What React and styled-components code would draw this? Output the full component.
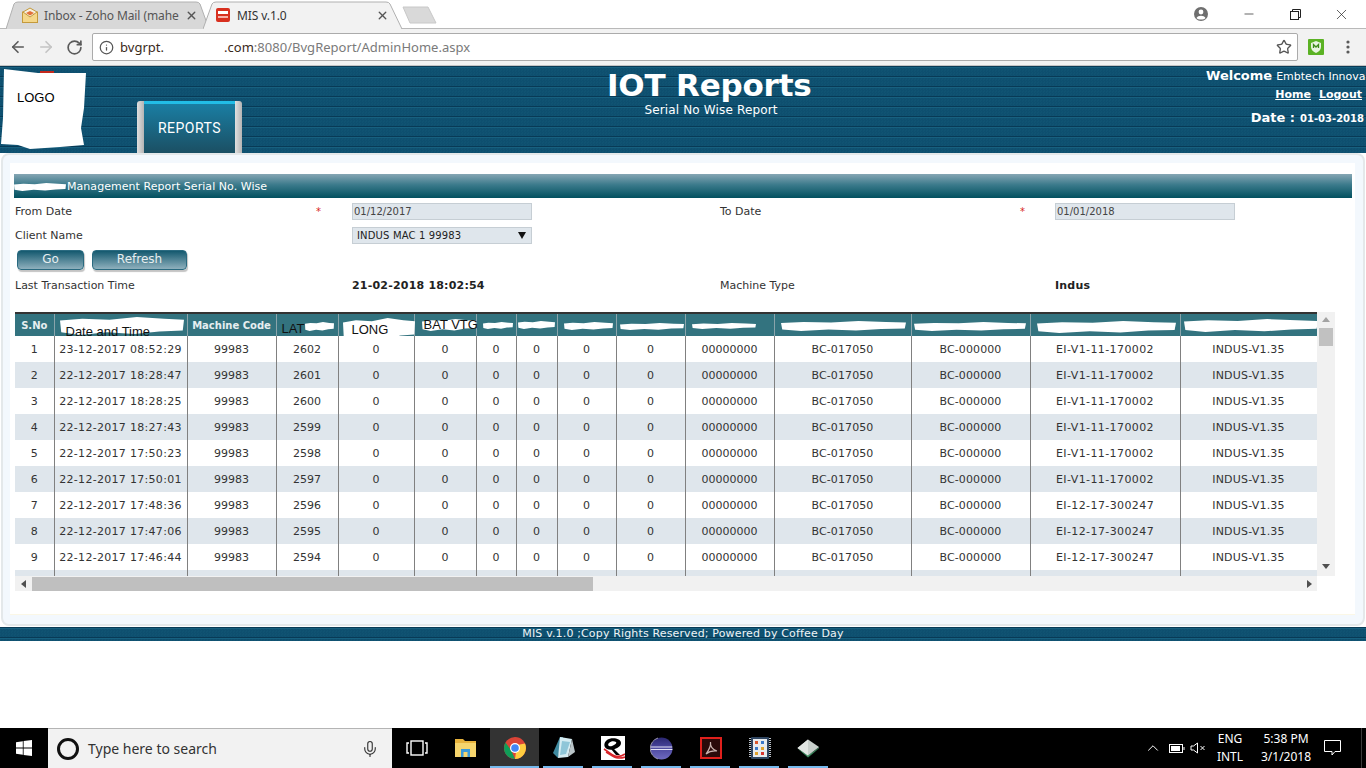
import React from "react";
import styled, { createGlobalStyle } from "styled-components";
import { ArrowLeft, ArrowRight, RotateCw, Star, X, Minus, Info, Mic, ChevronUp } from "lucide-react";

const GlobalStyle = createGlobalStyle`
  html, body {
    margin: 0;
    padding: 0;
    background: #fff;
    overflow: hidden;
  }
  * { box-sizing: border-box; }
`;

const Page = styled.div`
  width: 1366px;
  height: 768px;
  display: flex;
  flex-direction: column;
  font-family: "DejaVu Sans", Verdana, sans-serif;
  background: #fff;
`;

/* browser chrome */
const TabStrip = styled.div`
  height: 29px;
  flex: none;
  display: flex;
  align-items: flex-end;
  padding-left: 6px;
  background: #fff;
  border-bottom: 1px solid #b9b9b9;
  font-family: "Noto Sans", "Open Sans", sans-serif;
  font-size: 12px;
`;

const Tab = styled.div`
  position: relative;
  width: ${(p) => p.$width}px;
  height: 28px;
  margin-bottom: -1px;
  margin-right: -6px;
  display: flex;
  align-items: center;
  padding: 0 16px 0 ${(p) => p.$pad}px;
  gap: 6px;
  color: ${(p) => (p.$active ? "#333" : "#555")};
  z-index: ${(p) => (p.$active ? 2 : 1)};
`;

const TabShape = styled.svg`
  position: absolute;
  inset: 0;
  width: 100%;
  height: 100%;
`;

const TabIcon = styled.svg`
  position: relative;
  width: 16px;
  height: 16px;
  flex: none;
`;

const TabTitle = styled.span`
  position: relative;
  flex: 1;
  white-space: nowrap;
  letter-spacing: -0.1px;
`;

const TabClose = styled(X)`
  position: relative;
  flex: none;
  color: #555;
`;

const NewTab = styled.svg`
  width: 36px;
  height: 18px;
  margin: 0 0 4px 3px;
`;

const WindowControls = styled.div`
  margin-left: auto;
  height: 28px;
  display: flex;
  align-items: center;
  padding-right: 2px;
  color: #222;
`;

const WinButton = styled.div`
  width: 46px;
  height: 26px;
  display: flex;
  align-items: center;
  justify-content: center;
`;

const ProfileButton = styled(WinButton)`
  margin-right: 2px;
`;

const Toolbar = styled.div`
  height: 37px;
  flex: none;
  display: flex;
  align-items: center;
  background: #f2f2f2;
  border-bottom: 1px solid #c4c4c4;
  padding-left: 4px;
`;

const NavButton = styled.div`
  width: 28px;
  display: flex;
  justify-content: center;
  color: ${(p) => (p.$off ? "#c4c4c4" : "#5a5a5a")};
`;

const Omnibox = styled.div`
  width: 1206px;
  height: 28px;
  margin: 0 2px 0 4px;
  display: flex;
  align-items: center;
  background: #fff;
  border: 1px solid #ababab;
  border-radius: 2px;
  padding-left: 6px;
  font-family: "Noto Sans", "Open Sans", sans-serif;
  font-size: 13px;
  letter-spacing: 0.02px;
  color: #7a7a7a;
`;

const UrlDark = styled.span`
  color: #3a2a1a;
  margin-left: ${(p) => p.$gap || 0}px;
`;

const OmniStar = styled(Star)`
  margin-left: auto;
  margin-right: 5px;
  color: #555;
`;

const ExtSlot = styled.div`
  width: 32px;
  display: flex;
  justify-content: center;
`;

/* site header */
const SiteHeader = styled.header`
  height: 87px;
  flex: none;
  display: grid;
  grid-template-columns: 607px 204px minmax(0, 1fr);
  color: #fff;
  background-color: #0e5070;
  background-image:
    repeating-linear-gradient(180deg, #17607f 0 1px, transparent 1px 9px, #083a56 9px 10px),
    repeating-conic-gradient(#0e4f6f 0 25%, #105372 0 50%);
  background-size: 100% 10px, 3px 3px;
  background-position: 0 1px, 0 0;
`;

const HeaderLeft = styled.div`
  display: flex;
`;

const LogoBlock = styled.div`
  position: relative;
  width: 86px;
  height: 82px;
  margin-top: 2px;
  padding: 22px 0 0 17px;
  font-family: "Liberation Sans", Arial, sans-serif;
  font-size: 13px;
  color: #000;
`;

const LogoPaint = styled.svg`
  position: absolute;
  inset: 0;
  width: 86px;
  height: 82px;
`;

const LogoText = styled.span`
  position: relative;
`;

const NavTab = styled.div`
  align-self: flex-end;
  margin-left: 51px;
  width: 105px;
  height: 52px;
  display: flex;
  border-radius: 3px 3px 0 0;
  overflow: hidden;
`;

const NavEdge = styled.div`
  width: 7px;
  background: linear-gradient(90deg, #e0e0e0, #b4b4b4);
`;

const NavFace = styled.div`
  flex: 1;
  display: flex;
  align-items: center;
  justify-content: center;
  border-top: 3px solid #22bde6;
  background: linear-gradient(180deg, #1a7ea3, #1b4f63);
  font-family: Roboto, "Open Sans", sans-serif;
  font-size: 14px;
  letter-spacing: 0.5px;
  padding-bottom: 2px;
`;

const TitleBlock = styled.div`
  text-align: center;
`;

const SiteTitle = styled.div`
  font-size: 31px;
  font-weight: 700;
  line-height: 38px;
  letter-spacing: -0.2px;
  white-space: nowrap;
`;

const SubTitle = styled.div`
  font-size: 12px;
  line-height: 12px;
  padding-left: 4px;
  letter-spacing: 0.15px;
  white-space: nowrap;
`;

const UserBlock = styled.div`
  padding-top: 1px;
`;

const WelcomeRow = styled.div`
  margin-left: 395px;
  display: flex;
  align-items: baseline;
  gap: 4px;
  line-height: 17px;
  white-space: nowrap;
  font-size: 11px;
`;

const Strong = styled.b`
  font-size: ${(p) => p.$size}px;
`;

const LinkRow = styled.div`
  display: flex;
  justify-content: flex-end;
  gap: 8px;
  padding-right: 4px;
  margin-top: 3px;
  line-height: 14px;
  font-size: 11px;
  font-weight: 700;
`;

const HeaderLink = styled.span`
  text-decoration: underline;
`;

const DateRow = styled.div`
  display: flex;
  justify-content: flex-end;
  align-items: baseline;
  gap: 5px;
  padding-right: 2px;
  margin-top: 8px;
  line-height: 16px;
  white-space: nowrap;
`;

/* report panel */
const Panel = styled.main`
  height: 474px;
  flex: none;
  padding: 0 1px 1px;
  background: #fff;
`;

const PanelFrame = styled.div`
  height: 100%;
  padding: 8px 8px 9px 7px;
  background: #f3f8fd;
  border: 2px solid #e4e8ea;
  border-radius: 8px;
`;

const PanelBody = styled.div`
  height: 100%;
  background: #fff;
  padding: 11px 3px 0 4px;
  border-bottom: 1px solid #fbf7e6;
`;

const SectionBar = styled.div`
  position: relative;
  height: 24px;
  display: flex;
  align-items: center;
  padding-left: 53px;
  color: #fff;
  font-size: 11px;
  letter-spacing: 0.05px;
  background: linear-gradient(180deg, #86a6b4 0%, #3b7a8b 45%, #02505f 100%);
`;

const FormGrid = styled.div`
  display: grid;
  grid-template-columns: 301px 36px 368px 300px 35px 1fr;
  grid-auto-rows: 24px;
  align-items: center;
  padding-left: 1px;
  margin-top: 1px;
  color: #333;
  font-size: 11px;
`;

const Req = styled.span`
  color: #d8261c;
  font-size: 10px;
`;

const DateInput = styled.div`
  width: 180px;
  height: 17px;
  display: flex;
  align-items: center;
  padding-left: 1px;
  background: #dfe6ec;
  border: 1px solid #c6ced4;
  font-size: 10px;
  color: #444;
`;

const SelectBox = styled.div`
  width: 180px;
  height: 17px;
  display: flex;
  align-items: center;
  justify-content: space-between;
  padding: 0 5px 0 4px;
  background: #dfe6ec;
  border: 1px solid #c6ced4;
  font-size: 10px;
  letter-spacing: 0.15px;
  color: #222;
`;

const ButtonRow = styled.div`
  display: flex;
  gap: 8px;
  padding-left: 3px;
  margin-top: 3px;
  height: 20px;
`;

const ActionButton = styled.button`
  width: ${(p) => p.$width}px;
  height: 20px;
  padding: 0 0 2px;
  border: 1px solid #2a6a80;
  border-radius: 4px;
  color: #e8eef0;
  font-family: inherit;
  font-size: 12px;
  background: linear-gradient(180deg, #14596f 0%, #8fb0bd 100%);
  box-shadow: 1px 2px 1px #c4c4c4;
`;

const InfoGrid = styled(FormGrid)`
  margin-top: 3px;
`;

const Value = styled.b`
  font-size: 11px;
  letter-spacing: 0.2px;
  color: #222;
`;

const TableArea = styled.div`
  display: grid;
  grid-template-columns: 1302px 18px;
  grid-template-rows: 264px 15px;
  margin: 15px 0 0 1px;
`;

const TableClip = styled.div`
  overflow: hidden;
  background: #fff;
`;

const Grid = styled.table`
  table-layout: fixed;
  width: 1302px;
  border-collapse: collapse;
  font-size: 11px;
  color: #333;
`;

const HeadRow = styled.tr`
  height: 23px;
  background: #33737f;
  border-top: 2px solid #333;
`;

const HeadCell = styled.th`
  position: relative;
  padding: 0;
  font-size: 10px;
  font-weight: 700;
  color: #e6eef0;
  white-space: nowrap;
  border-left: 1px solid #8aa4ab;
  &:first-child { border-left: 0; }
  &:last-child { border-right: 1px solid #808080; }
`;

const Row = styled.tr`
  height: 26px;
  background: ${(p) => (p.$alt ? "#dfe6ec" : "#fff")};
`;

const Cell = styled.td`
  padding: 0;
  text-align: center;
  white-space: nowrap;
  letter-spacing: ${(p) => p.$ls || 0}px;
  border-left: 1px solid #808080;
  &:first-child { border-left: 0; }
  &:last-child { border-right: 1px solid #808080; }
`;

const Blot = styled.svg`
  position: absolute;
  left: ${(p) => p.$x}px;
  top: ${(p) => p.$y}px;
  width: ${(p) => p.$w}px;
  height: ${(p) => p.$h}px;
  z-index: 1;
  overflow: visible;
`;

const PenLabel = styled.span`
  position: absolute;
  left: ${(p) => p.$x}px;
  top: ${(p) => p.$y}px;
  z-index: 2;
  font-family: "Liberation Sans", Arial, sans-serif;
  font-size: 13px;
  font-weight: 400;
  line-height: 15px;
  color: #111;
`;

const VScroll = styled.div`
  background: #f1f1f1;
  display: flex;
  flex-direction: column;
  align-items: center;
  padding-top: 5px;
`;

const VThumb = styled.div`
  width: 14px;
  height: 18px;
  margin-top: 6px;
  background: #c1c1c1;
`;

const HScroll = styled.div`
  display: flex;
  align-items: center;
  background: #f1f1f1;
  padding-left: 6px;
`;

const HThumb = styled.div`
  width: 561px;
  height: 14px;
  margin-left: 6px;
  background: #bfbfbf;
`;

const Arrow = styled.svg`
  flex: none;
  width: ${(p) => p.$w}px;
  height: ${(p) => p.$h}px;
  margin: ${(p) => p.$m || 0};
`;

/* footer */
const SiteFooter = styled.footer`
  height: 14px;
  flex: none;
  text-align: center;
  color: #eef4f6;
  font-size: 11px;
  line-height: 13px;
  letter-spacing: 0.15px;
  background-color: #0e5070;
  background-image:
    repeating-linear-gradient(180deg, #17607f 0 1px, transparent 1px 9px, #083a56 9px 10px),
    repeating-conic-gradient(#0e4f6f 0 25%, #105372 0 50%);
  background-size: 100% 10px, 3px 3px;
  background-position: 0 1px, 0 0;
`;

const Filler = styled.div`
  flex: 1;
  background: #fff;
`;

/* windows taskbar */
const Taskbar = styled.div`
  height: 40px;
  flex: none;
  display: flex;
  background: #000;
  color: #fff;
  font-family: "Noto Sans", "Open Sans", sans-serif;
`;

const StartButton = styled.div`
  width: 48px;
  display: flex;
  align-items: center;
  justify-content: center;
`;

const SearchBox = styled.div`
  width: 344px;
  display: flex;
  align-items: center;
  padding: 0 13px 0 9px;
  background: #f2f2f2;
  border-top: 1px solid #b4b4b4;
  color: #333;
  font-size: 14px;
  gap: 9px;
`;

const CortanaRing = styled.div`
  width: 22px;
  height: 22px;
  border: 3px solid #111;
  border-radius: 50%;
`;

const SearchMic = styled(Mic)`
  margin-left: auto;
  color: #333;
`;

const TaskSlot = styled.div`
  position: relative;
  width: 49px;
  display: flex;
  align-items: center;
  justify-content: center;
  background: ${(p) => (p.$active ? "#333" : "transparent")};
  &::after {
    content: "";
    display: ${(p) => (p.$running ? "block" : "none")};
    position: absolute;
    left: ${(p) => (p.$active ? 0 : 4)}px;
    right: ${(p) => (p.$active ? 0 : 5)}px;
    bottom: 0;
    height: 2px;
    background: #76b9ed;
  }
`;

const Tray = styled.div`
  margin-left: auto;
  margin-right: 4px;
  padding-right: 17px;
  height: 100%;
  display: flex;
  align-items: center;
  font-size: 12px;
  border-right: 1px solid #3a3a3a;
`;

const TrayIcon = styled.div`
  width: ${(p) => p.$w}px;
  display: flex;
  justify-content: center;
`;

const TrayText = styled.div`
  width: ${(p) => p.$w}px;
  text-align: center;
  line-height: 18px;
  white-space: nowrap;
`;

const COLS = [39, 133, 89, 62, 76, 62, 40, 41, 59, 69, 89, 137, 119, 150, 137];

const HEAD_CELLS = [
  { label: "S.No" },
  { blot: [5, 3, 124, 18], pen: ["Date and Time", 11, 10] },
  { label: "Machine Code" },
  { blot: [28, 8, 29, 9], pen: ["LAT", 5, 7] },
  { blot: [4, 4, 72, 22], pen: ["LONG", 13, 8] },
  { blot: [7, 5, 54, 12], pen: ["BAT VTG", 9, 3] },
  { blot: [6, 8, 30, 7] },
  { blot: [1, 7, 37, 8] },
  { blot: [6, 8, 49, 8] },
  { blot: [3, 9, 64, 7] },
  { blot: [6, 9, 64, 6] },
  { blot: [6, 7, 125, 10] },
  { blot: [2, 8, 112, 9] },
  { blot: [6, 7, 139, 12] },
  { blot: [3, 5, 134, 13] },
];

const ROWS = [
  ["1", "23-12-2017 08:52:29", "2602", "EI-V1-11-170002"],
  ["2", "22-12-2017 18:28:47", "2601", "EI-V1-11-170002"],
  ["3", "22-12-2017 18:28:25", "2600", "EI-V1-11-170002"],
  ["4", "22-12-2017 18:27:43", "2599", "EI-V1-11-170002"],
  ["5", "22-12-2017 17:50:23", "2598", "EI-V1-11-170002"],
  ["6", "22-12-2017 17:50:01", "2597", "EI-V1-11-170002"],
  ["7", "22-12-2017 17:48:36", "2596", "EI-12-17-300247"],
  ["8", "22-12-2017 17:47:06", "2595", "EI-12-17-300247"],
  ["9", "22-12-2017 17:46:44", "2594", "EI-12-17-300247"],
];

// rough white paint stroke, stretched to whatever box it is given
const PaintBlot = ({ box }) => (
  <Blot $x={box[0]} $y={box[1]} $w={box[2]} $h={box[3]} viewBox="0 0 100 20" preserveAspectRatio="none">
    <path fill="#fff" d="M0 4 L18 2 L40 3 L62 0 L84 2 L100 3 L99 15 L80 16 L60 19 L38 17 L16 20 L1 17 Z" />
  </Blot>
);

const WindowsLogo = () => (
  <svg width="16" height="16" viewBox="0 0 16 16" fill="#fff">
    <path d="M0 2.2 L6.8 1.2 V7.6 H0 Z M7.6 1.1 L16 0 V7.6 H7.6 Z M0 8.4 H6.8 V14.8 L0 13.8 Z M7.6 8.4 H16 V16 L7.6 14.9 Z" />
  </svg>
);

const FolderIcon = () => (
  <svg width="22" height="20" viewBox="0 0 22 20">
    <path fill="#e8b33c" d="M0 1 H8 L10 3 H21 V19 H0 Z" />
    <path fill="#f6d56d" d="M0 5 H21 V19 H0 Z" />
    <path fill="#3a9ad9" d="M6 11 H15 V19 H12.5 V14 H8.5 V19 H6 Z" />
  </svg>
);

const ChromeIcon = () => (
  <svg width="22" height="22" viewBox="0 0 22 22">
    <circle cx="11" cy="11" r="11" fill="#db4437" />
    <path fill="#0f9d58" d="M11 22 A11 11 0 0 1 1.5 5.5 L7 13 Z" />
    <path fill="#ffcd40" d="M11 22 A11 11 0 0 0 21 6.5 L13 8 Z" />
    <circle cx="11" cy="11" r="5" fill="#fff" />
    <circle cx="11" cy="11" r="3.8" fill="#4285f4" />
  </svg>
);

const NotepadIcon = () => (
  <svg width="22" height="24" viewBox="0 0 22 24">
    <path fill="#3f8aa0" d="M0 17 L7 1 L10 1 L5 22 Z" />
    <path fill="#d5ecf2" d="M7 1 L19 3 L15 21 L5 22 Z" />
    <path fill="#8fc6d8" d="M9 5 L17 6 L13 18 L7 19 Z" />
    <path fill="#b9c4c8" d="M19 3 L22 16 L15 21 Z" />
  </svg>
);

const QIcon = () => (
  <svg width="24" height="24" viewBox="0 0 24 24">
    <rect width="24" height="24" fill="#fff" />
    <path d="M6 4 C10 1 20 2 20 7 C20 12 11 15 6 13 C2 11 3 6 6 4 Z M8 7 C6 9 8 11 11 10 C14 9 16 7 15 6 C13 5 10 5 8 7 Z" fill="#000" fillRule="evenodd" />
    <path d="M10 13 L13 13 L19 19 L15 19 Z" fill="#000" />
    <path d="M3 13 C8 16 10 19 14 20 C18 21 21 20 24 18 M5 16 C9 18 12 22 17 22 C20 22 22 22 24 21" fill="none" stroke="#d9252a" strokeWidth="1.6" />
  </svg>
);

const EclipseIcon = () => (
  <svg width="23" height="23" viewBox="0 0 23 23">
    <defs>
      <linearGradient id="eclipseFace" x1="0" y1="0" x2="0" y2="1">
        <stop offset="0" stopColor="#2a2670" />
        <stop offset="0.45" stopColor="#4a469c" />
        <stop offset="1" stopColor="#6f6bc0" />
      </linearGradient>
    </defs>
    <circle cx="11.5" cy="11.5" r="11" fill="url(#eclipseFace)" />
    <path fill="#e4e2f6" d="M0.8 9.5 H22.2 V10.5 H0.8 Z M0.6 12 H22.4 V13 H0.6 Z" />
    <path fill="none" stroke="#9b97b0" d="M8 1 A11 11 0 0 0 8 22" />
  </svg>
);

const AcrobatIcon = () => (
  <svg width="22" height="22" viewBox="0 0 22 22">
    <rect x="1" y="1" width="20" height="20" fill="#2a0a0a" stroke="#e0201c" strokeWidth="2" />
    <path fill="none" stroke="#c9b4b0" strokeWidth="1.2" d="M6 17 C9 13 11 9 10.5 5 C10 9 12.5 13 17 14 C13 13.5 9 14.5 6 17 Z" />
  </svg>
);

const ChipIcon = () => (
  <svg width="22" height="22" viewBox="0 0 22 22">
    <path stroke="#b9c0c8" strokeWidth="2" strokeDasharray="1 1" d="M1 1 V21 M21 1 V21" />
    <rect x="2" y="0" width="18" height="22" rx="1" fill="#2f4560" />
    <rect x="4" y="2" width="14" height="18" fill="#e8ebee" />
    <rect x="6" y="4" width="3" height="3" fill="#d9562e" />
    <rect x="12" y="4" width="3" height="3" fill="#3b79c9" />
    <rect x="6" y="10" width="3" height="3" fill="#3b79c9" />
    <rect x="12" y="10" width="3" height="3" fill="#e0a22d" />
    <rect x="6" y="15" width="3" height="3" fill="#e0a22d" />
    <rect x="12" y="15" width="3" height="3" fill="#d9362e" />
  </svg>
);

const GemIcon = () => (
  <svg width="23" height="19" viewBox="0 0 23 19">
    <path fill="#3e8f62" d="M1 10 L11 19 L22 8 L22 9 L11 18.9 Z" />
    <path fill="#3e8f62" d="M0.5 9.5 L11 18.5 L22.5 8.5 L11 16 Z" />
    <path fill="#c9d0cc" d="M11 0.5 L22 8 L11 16.5 L0.5 9 Z" />
    <path fill="#e2e6e3" d="M11 0.5 L11 16.5 L0.5 9 Z" />
  </svg>
);

export default function App() {
  return (
    <Page>
      <GlobalStyle />

      <TabStrip>
        <Tab $width={203} $pad={16}>
          <TabShape viewBox="0 0 203 28" preserveAspectRatio="none">
            <path fill="#d8d8d8" stroke="#b0b0b0" d="M0 28 L8 3 Q9 1 12 1 H190 Q193 1 194 3 L203 28" />
          </TabShape>
          <TabIcon viewBox="0 0 16 16">
            <rect x="0.5" y="5" width="15" height="10.5" fill="#f4d78a" stroke="#c49a3c" />
            <path d="M1 5 L8 1 L15 5 L8 10 Z" fill="#f6f0df" stroke="#c49a3c" />
            <path d="M4 6 L8 4 L12 6 L8 8.5 Z" fill="#e2703a" />
          </TabIcon>
          <TabTitle>Inbox - Zoho Mail (mahe</TabTitle>
          <TabClose size={13} strokeWidth={2.5} />
        </Tab>
        <Tab $width={202} $pad={12} $active>
          <TabShape viewBox="0 0 202 28" preserveAspectRatio="none">
            <path fill="#f2f2f2" stroke="#b0b0b0" d="M0 28 L9 3 Q10 1 13 1 H183 Q186 1 187 3 L199 28" />
          </TabShape>
          <TabIcon viewBox="0 0 16 16">
            <rect x="1" y="1" width="14" height="14" rx="2" fill="#d8301f" />
            <rect x="3" y="4" width="10" height="3" fill="#fff" />
            <rect x="3" y="9" width="10" height="2" fill="#f6b0a8" />
          </TabIcon>
          <TabTitle>MIS v.1.0</TabTitle>
          <TabClose size={13} strokeWidth={2.5} />
        </Tab>
        <NewTab viewBox="0 0 36 18">
          <path fill="#d9d9d9" stroke="#c8c8c8" d="M1 1 H26 L34 17 H8 Z" />
        </NewTab>
        <WindowControls>
          <ProfileButton>
            <svg width="16" height="16" viewBox="0 0 16 16">
              <circle cx="8" cy="8" r="7" fill="#6f6f6f" />
              <circle cx="8" cy="6" r="2.4" fill="#fff" />
              <path d="M3.5 12 C5 9 11 9 12.5 12 C11 14 5 14 3.5 12 Z" fill="#fff" />
            </svg>
          </ProfileButton>
          <WinButton>
            <Minus size={14} strokeWidth={1.2} />
          </WinButton>
          <WinButton>
            <svg width="11" height="11" viewBox="0 0 11 11" fill="none" stroke="#222">
              <rect x="0.5" y="2.5" width="8" height="8" />
              <path d="M2.5 2.5 V0.5 H10.5 V8.5 H8.5" />
            </svg>
          </WinButton>
          <WinButton>
            <X size={17} strokeWidth={1} />
          </WinButton>
        </WindowControls>
      </TabStrip>

      <Toolbar>
        <NavButton><ArrowLeft size={18} strokeWidth={2.2} /></NavButton>
        <NavButton $off><ArrowRight size={18} strokeWidth={2.2} /></NavButton>
        <NavButton><RotateCw size={17} strokeWidth={2.4} /></NavButton>
        <Omnibox>
          <Info size={15} color="#555" strokeWidth={2} />
          <UrlDark $gap={6}>bvgrpt.</UrlDark>
          <UrlDark $gap={60}>.com</UrlDark>
          <span>:8080/BvgReport/AdminHome.aspx</span>
          <OmniStar size={16} strokeWidth={2} />
        </Omnibox>
        <ExtSlot>
          <svg width="16" height="16" viewBox="0 0 16 16">
            <rect width="16" height="16" rx="1" fill="#5bb224" />
            <path d="M8 2 L13 4 V8 C13 11 10.5 13 8 14 C5.5 13 3 11 3 8 V4 Z" fill="#e8f4e0" />
            <path d="M5.5 9 V5.5 L8 8 L10.5 5.5 V9" fill="none" stroke="#3d8a1a" strokeWidth="1.3" />
          </svg>
        </ExtSlot>
        <ExtSlot>
          <svg width="4" height="14" viewBox="0 0 4 14" fill="#5a5a5a">
            <circle cx="2" cy="2" r="1.6" />
            <circle cx="2" cy="7" r="1.6" />
            <circle cx="2" cy="12" r="1.6" />
          </svg>
        </ExtSlot>
      </Toolbar>

      <SiteHeader>
        <HeaderLeft>
          <LogoBlock>
            <LogoPaint viewBox="0 0 86 82">
              <path fill="#c4281c" d="M40 3 H54 V6 H40 Z" />
              <path fill="#fff" d="M4 1 L38 5 L86 5 L84 40 L81 60 L84 77 L60 79 L30 81 L18 77 L1 76 L3 50 Z" />
            </LogoPaint>
            <LogoText>LOGO</LogoText>
          </LogoBlock>
          <NavTab>
            <NavEdge />
            <NavFace>REPORTS</NavFace>
            <NavEdge />
          </NavTab>
        </HeaderLeft>
        <TitleBlock>
          <SiteTitle>IOT Reports</SiteTitle>
          <SubTitle>Serial No Wise Report</SubTitle>
        </TitleBlock>
        <UserBlock>
          <WelcomeRow>
            <Strong $size={13}>Welcome</Strong>
            <span>Embtech Innova</span>
          </WelcomeRow>
          <LinkRow>
            <HeaderLink>Home</HeaderLink>
            <HeaderLink>Logout</HeaderLink>
          </LinkRow>
          <DateRow>
            <Strong $size={13}>Date :</Strong>
            <Strong $size={10}>01-03-2018</Strong>
          </DateRow>
        </UserBlock>
      </SiteHeader>

      <Panel>
        <PanelFrame>
          <PanelBody>
            <SectionBar>
              <PaintBlot box={[0, 9, 52, 8]} />
              Management Report Serial No. Wise
            </SectionBar>
            <FormGrid>
              <span>From Date</span>
              <Req>*</Req>
              <DateInput>01/12/2017</DateInput>
              <span>To Date</span>
              <Req>*</Req>
              <DateInput>01/01/2018</DateInput>
              <span>Client Name</span>
              <span />
              <SelectBox>
                INDUS MAC 1 99983
                <svg width="8" height="7" viewBox="0 0 8 7"><path d="M0 0 H8 L4 7 Z" fill="#111" /></svg>
              </SelectBox>
            </FormGrid>
            <ButtonRow>
              <ActionButton $width={67}>Go</ActionButton>
              <ActionButton $width={95}>Refresh</ActionButton>
            </ButtonRow>
            <InfoGrid>
              <span>Last Transaction Time</span>
              <span />
              <Value>21-02-2018 18:02:54</Value>
              <span>Machine Type</span>
              <span />
              <Value>Indus</Value>
            </InfoGrid>
            <TableArea>
              <TableClip>
                <Grid>
                  <colgroup>
                    {COLS.map((w, i) => <col key={i} width={w} />)}
                  </colgroup>
                  <thead>
                    <HeadRow>
                      {HEAD_CELLS.map((h, i) => (
                        <HeadCell key={i}>
                          {h.label}
                          {h.blot && <PaintBlot box={h.blot} />}
                          {h.pen && <PenLabel $x={h.pen[1]} $y={h.pen[2]}>{h.pen[0]}</PenLabel>}
                        </HeadCell>
                      ))}
                    </HeadRow>
                  </thead>
                  <tbody>
                    {ROWS.map((r, i) => (
                      <Row key={r[0]} $alt={i % 2 === 1}>
                        <Cell>{r[0]}</Cell>
                        <Cell $ls={0.3}>{r[1]}</Cell>
                        <Cell>99983</Cell>
                        <Cell>{r[2]}</Cell>
                        <Cell>0</Cell>
                        <Cell>0</Cell>
                        <Cell>0</Cell>
                        <Cell>0</Cell>
                        <Cell>0</Cell>
                        <Cell>0</Cell>
                        <Cell>00000000</Cell>
                        <Cell $ls={0.1}>BC-017050</Cell>
                        <Cell $ls={0.1}>BC-000000</Cell>
                        <Cell $ls={0.4}>{r[3]}</Cell>
                        <Cell $ls={0.2}>INDUS-V1.35</Cell>
                      </Row>
                    ))}
                    {/* next row is scrolled almost out of view, only its band shows */}
                    <Row $alt>
                      {COLS.map((w, i) => <Cell key={i} />)}
                    </Row>
                  </tbody>
                </Grid>
              </TableClip>
              <VScroll>
                <Arrow $w={8} $h={5} viewBox="0 0 8 5"><path d="M4 0 L8 5 H0 Z" fill="#a3a3a3" /></Arrow>
                <VThumb />
                <Arrow $w={8} $h={5} $m="auto 0 7px" viewBox="0 0 8 5"><path d="M0 0 H8 L4 5 Z" fill="#505050" /></Arrow>
              </VScroll>
              <HScroll>
                <Arrow $w={5} $h={8} viewBox="0 0 5 8"><path d="M5 0 V8 L0 4 Z" fill="#505050" /></Arrow>
                <HThumb />
                <Arrow $w={5} $h={8} $m="0 5px 0 auto" viewBox="0 0 5 8"><path d="M0 0 V8 L5 4 Z" fill="#505050" /></Arrow>
              </HScroll>
            </TableArea>
          </PanelBody>
        </PanelFrame>
      </Panel>

      <SiteFooter>MIS v.1.0 ;Copy Rights Reserved; Powered by Coffee Day</SiteFooter>
      <Filler />

      <Taskbar>
        <StartButton><WindowsLogo /></StartButton>
        <SearchBox>
          <CortanaRing />
          Type here to search
          <SearchMic size={18} strokeWidth={1.5} />
        </SearchBox>
        <TaskSlot>
          <svg width="22" height="16" viewBox="0 0 22 16" fill="none" stroke="#fff" strokeWidth="1.4">
            <rect x="5" y="1" width="12" height="14" />
            <path d="M3 3 H1 V13 H3 M19 3 H21 V13 H19" />
          </svg>
        </TaskSlot>
        <TaskSlot><FolderIcon /></TaskSlot>
        <TaskSlot $active $running><ChromeIcon /></TaskSlot>
        <TaskSlot $running><NotepadIcon /></TaskSlot>
        <TaskSlot $running><QIcon /></TaskSlot>
        <TaskSlot $running><EclipseIcon /></TaskSlot>
        <TaskSlot $running><AcrobatIcon /></TaskSlot>
        <TaskSlot $running><ChipIcon /></TaskSlot>
        <TaskSlot $running><GemIcon /></TaskSlot>
        <Tray>
          <TrayIcon $w={25}><ChevronUp size={18} strokeWidth={1.3} /></TrayIcon>
          <TrayIcon $w={23}>
            <svg width="16" height="9" viewBox="0 0 16 9" fill="none" stroke="#fff">
              <rect x="0.5" y="0.5" width="13" height="8" />
              <rect x="2" y="2" width="9" height="5" fill="#fff" stroke="none" />
              <path d="M15 3 V6" />
            </svg>
          </TrayIcon>
          <TrayIcon $w={20}>
            <svg width="16" height="12" viewBox="0 0 16 12" fill="none" stroke="#fff">
              <path d="M1 4 H3.5 L7.5 1 V11 L3.5 8 H1 Z" />
              <path d="M10.5 4 L14.5 8 M14.5 4 L10.5 8" />
            </svg>
          </TrayIcon>
          <TrayText $w={44}>ENG<br />INTL</TrayText>
          <TrayText $w={68}>5:38 PM<br />3/1/2018</TrayText>
          <TrayIcon $w={24}>
            <svg width="17" height="16" viewBox="0 0 17 16" fill="none" stroke="#fff">
              <path d="M0.5 0.5 H16.5 V11.5 H11 L8 15 V11.5 H0.5 Z" />
            </svg>
          </TrayIcon>
        </Tray>
      </Taskbar>
    </Page>
  );
}
